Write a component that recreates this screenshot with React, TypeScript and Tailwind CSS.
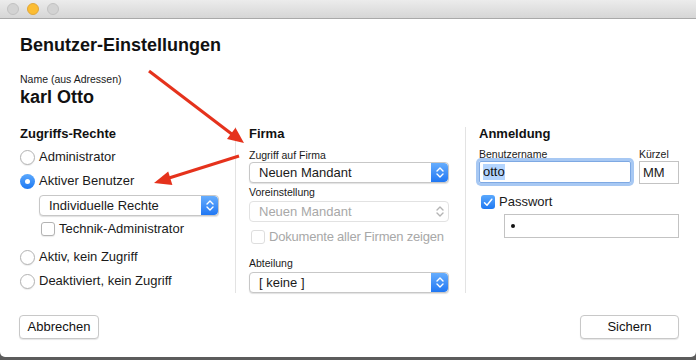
const arrowRed = '#e5321c';

function Stepper({ disabled }: { disabled?: boolean }) {
  return (
    <div
      className={
        disabled
          ? 'flex w-[17px] items-center justify-center'
          : 'flex w-[17px] items-center justify-center rounded-r-[4px] bg-gradient-to-b from-[#66adfd] to-[#1f77f3]'
      }
    >
      <svg width="8" height="13" viewBox="0 0 8 13" fill="none">
        <path
          d="M1 5 L4 2 L7 5 M1 8 L4 11 L7 8"
          stroke={disabled ? '#b4b4b4' : '#ffffff'}
          strokeWidth="1.4"
          strokeLinecap="round"
          strokeLinejoin="round"
        />
      </svg>
    </div>
  );
}

function Select({ value, disabled, className = '' }: { value: string; disabled?: boolean; className?: string }) {
  return (
    <div
      className={`flex h-[21px] overflow-hidden rounded-[4px] border bg-white ${
        disabled
          ? 'border-[#e2e2e2] text-[#a8a8a8]'
          : 'border-[#c7c7c7] text-[#1a1a1a] shadow-[0_1px_1px_rgba(0,0,0,0.12)]'
      } ${className}`}
    >
      <div className="flex flex-1 items-center pl-[9px] text-[13px]">{value}</div>
      <Stepper disabled={disabled} />
    </div>
  );
}

function Radio({ label, checked }: { label: string; checked?: boolean }) {
  return (
    <div className="flex h-[24px] items-center gap-[4px]">
      {checked ? (
        <div className="flex h-[15px] w-[15px] items-center justify-center rounded-full bg-gradient-to-b from-[#5aa8fd] to-[#1c78f2]">
          <div className="h-[5px] w-[5px] rounded-full bg-white" />
        </div>
      ) : (
        <div className="h-[15px] w-[15px] rounded-full border border-[#b3b3b3] bg-white shadow-[0_1px_1px_rgba(0,0,0,0.08)]" />
      )}
      <span className="text-[13px] text-[#1a1a1a]">{label}</span>
    </div>
  );
}

function Checkbox({ label, checked, disabled }: { label: string; checked?: boolean; disabled?: boolean }) {
  return (
    <div className="flex h-[16px] items-center gap-[4px] whitespace-nowrap">
      {checked ? (
        <div className="flex h-[14px] w-[14px] shrink-0 items-center justify-center rounded-[3px] bg-gradient-to-b from-[#5aa8fd] to-[#1c78f2]">
          <svg width="10" height="9" viewBox="0 0 10 9" fill="none">
            <path d="M1.5 4.8 L4 7.3 L8.8 1.2" stroke="#fff" strokeWidth="1.5" strokeLinecap="round" strokeLinejoin="round" />
          </svg>
        </div>
      ) : (
        <div
          className={`h-[14px] w-[14px] shrink-0 rounded-[3px] border bg-white ${
            disabled ? 'border-[#dedede]' : 'border-[#b3b3b3] shadow-[0_1px_1px_rgba(0,0,0,0.08)]'
          }`}
        />
      )}
      <span className={`text-[13px] ${disabled ? 'tracking-[-0.2px] text-[#a8a8a8]' : 'text-[#1a1a1a]'}`}>{label}</span>
    </div>
  );
}

function Button({ children, className = '' }: { children: React.ReactNode; className?: string }) {
  return (
    <div
      className={`flex h-[24px] items-center justify-center rounded-[4px] border border-[#c8c8c8] bg-white text-[13px] text-[#111] shadow-[0_1px_1px_rgba(0,0,0,0.1)] ${className}`}
    >
      {children}
    </div>
  );
}

export default function App() {
  return (
    <div className="relative h-[360px] w-[696px] overflow-hidden bg-[#5c5c5c] font-['Liberation_Sans',Arial,sans-serif]">
      <div className="flex h-[357px] flex-col rounded-b-[5px] bg-white">
        {/* title bar */}
        <div className="flex h-[19px] items-center gap-[8px] border-b border-[#a9a9a9] bg-gradient-to-b from-[#ececec] to-[#d6d6d6] pl-[7px]">
          <div className="h-[12px] w-[12px] rounded-full border border-[#c2c2c2] bg-[#d3d3d3]" />
          <div className="h-[12px] w-[12px] rounded-full border border-[#e0a73a] bg-[#fcbd33]" />
          <div className="h-[12px] w-[12px] rounded-full border border-[#c2c2c2] bg-[#d3d3d3]" />
        </div>

        <div className="pl-[20px] pr-[17px] pt-[15px]">
          <h1 className="text-[18px] font-bold leading-[22px] text-[#111]">Benutzer-Einstellungen</h1>
          <p className="mt-[17px] text-[10.5px] leading-[13px] text-[#1a1a1a]">Name (aus Adressen)</p>
          <p className="text-[18px] font-bold leading-[22px] text-[#111]">karl Otto</p>

          <div className="mt-[18px] flex">
            {/* Zugriffs-Rechte */}
            <div className="w-[215px] shrink-0">
              <h2 className="text-[13px] font-bold leading-[16px] text-[#111]">Zugriffs-Rechte</h2>
              <div className="mt-[3px]">
                <Radio label="Administrator" />
                <Radio label="Aktiver Benutzer" checked />
              </div>
              <Select value="Individuelle Rechte" className="ml-[19px] mt-[2px] w-[180px]" />
              <div className="ml-[21px] mt-[5px]">
                <Checkbox label="Technik-Administrator" />
              </div>
              <div className="mt-[8px]">
                <Radio label="Aktiv, kein Zugriff" />
                <Radio label="Deaktiviert, kein Zugriff" />
              </div>
            </div>

            <div className="mt-px h-[166px] w-px shrink-0 bg-[#e3e3e3]" />

            {/* Firma */}
            <div className="w-[229px] shrink-0 pl-[13px] pr-[16px]">
              <h2 className="text-[13px] font-bold leading-[16px] text-[#111]">Firma</h2>
              <p className="mt-[7px] text-[10.5px] leading-[13px] text-[#1a1a1a]">Zugriff auf Firma</p>
              <Select value="Neuen Mandant" />
              <p className="mt-[3px] text-[10.5px] leading-[13px] text-[#1a1a1a]">Voreinstellung</p>
              <Select value="Neuen Mandant" disabled className="mt-[2px]" />
              <div className="ml-[2px] mt-[7px]">
                <Checkbox label="Dokumente aller Firmen zeigen" disabled />
              </div>
              <p className="mt-[12px] text-[10.5px] leading-[13px] text-[#1a1a1a]">Abteilung</p>
              <Select value="[ keine ]" className="mt-[2px]" />
            </div>

            <div className="mt-px h-[166px] w-px shrink-0 bg-[#e3e3e3]" />

            {/* Anmeldung */}
            <div className="w-[213px] shrink-0 pl-[13px]">
              <h2 className="text-[13px] font-bold leading-[16px] text-[#111]">Anmeldung</h2>
              <div className="mt-[6px] grid grid-cols-[152px_40px] gap-x-[8px]">
                <p className="text-[10.5px] leading-[13px] text-[#1a1a1a]">Benutzername</p>
                <p className="text-[10.5px] leading-[13px] text-[#1a1a1a]">Kürzel</p>
                <div className="flex h-[22px] items-center rounded-[2px] border border-[#7ea9e3] pl-[3px] shadow-[0_0_0_3px_#a7c8f3]">
                  <span className="bg-[#b4d5fe] text-[13px] leading-[16px] text-[#111]">otto</span>
                </div>
                <div className="flex h-[23px] items-center border border-[#c3c3c3] pl-[3px] text-[13px] text-[#1a1a1a]">MM</div>
              </div>
              <div className="ml-[2px] mt-[10px]">
                <Checkbox label="Passwort" checked />
              </div>
              <div className="ml-[25px] mt-[4px] flex h-[24px] items-center border border-[#c3c3c3] pl-[6px]">
                <div className="h-[4px] w-[4px] rounded-full bg-[#111]" />
              </div>
            </div>
          </div>
        </div>

        <div className="mt-[22px] flex justify-between pl-[19px] pr-[17px]">
          <Button className="w-[80px]">Abbrechen</Button>
          <Button className="w-[99px]">Sichern</Button>
        </div>
      </div>

      {/* annotation arrows */}
      <svg className="pointer-events-none absolute inset-0" width="696" height="360" viewBox="0 0 696 360">
        <line x1="149" y1="71" x2="233" y2="135" stroke={arrowRed} strokeWidth="3" />
        <polygon points="244,143 227,139 235.5,127.7" fill={arrowRed} />
        <line x1="239" y1="156" x2="169" y2="178" stroke={arrowRed} strokeWidth="3" />
        <polygon points="154,183 168.2,171.5 172.4,184.9" fill={arrowRed} />
      </svg>
    </div>
  );
}
